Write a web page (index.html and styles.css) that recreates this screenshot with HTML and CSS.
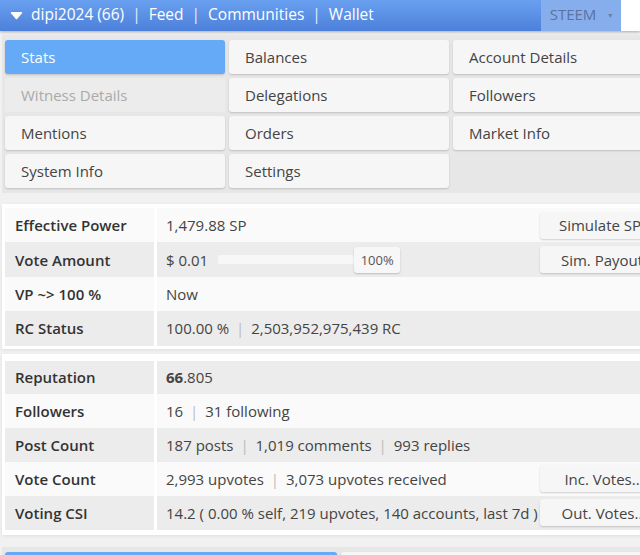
FILE: index.html
```html
<!DOCTYPE html>
<html>
<head>
  <title>Steem Stats</title>
  <link rel="stylesheet" href="styles.css">
</head>
<body>
  <header class="topbar">
    <nav class="user-nav">
      <svg class="caret" width="13" height="9" viewBox="0 0 13 9"><path d="M1.5 1h10a.8.8 0 0 1 .6 1.3L7.1 8a.8.8 0 0 1-1.2 0L.9 2.3A.8.8 0 0 1 1.5 1z" fill="#fff"/></svg>
      <a href="#">dipi2024 (66)</a>
      <span class="sep">|</span>
      <a href="#">Feed</a>
      <span class="sep">|</span>
      <a href="#">Communities</a>
      <span class="sep">|</span>
      <a href="#">Wallet</a>
    </nav>
    <div class="chain-select">STEEM <span class="chain-dot">&#9662;</span></div>
    <div class="topbar-end"></div>
  </header>

  <main class="page">
    <div class="tabs">
      <button class="tab active">Stats</button>
      <button class="tab">Balances</button>
      <button class="tab">Account Details</button>
      <button class="tab disabled">Witness Details</button>
      <button class="tab">Delegations</button>
      <button class="tab">Followers</button>
      <button class="tab">Mentions</button>
      <button class="tab">Orders</button>
      <button class="tab">Market Info</button>
      <button class="tab">System Info</button>
      <button class="tab">Settings</button>
    </div>

    <section class="panel first">
      <table class="stats">
        <tr class="light">
          <th>Effective Power</th>
          <td><div class="value"><span>1,479.88 SP</span><button class="side-btn">Simulate SP.</button></div></td>
        </tr>
        <tr class="dark">
          <th>Vote Amount</th>
          <td>
            <div class="value">
              <span>$ 0.01</span>
              <span class="slider"><span class="track"></span><span class="knob">100%</span></span>
              <button class="side-btn">Sim. Payout</button>
            </div>
          </td>
        </tr>
        <tr class="light">
          <th>VP ~&gt; 100 %</th>
          <td><div class="value"><span>Now</span></div></td>
        </tr>
        <tr class="dark">
          <th>RC Status</th>
          <td><div class="value"><span>100.00 % <span class="sep">|</span> 2,503,952,975,439 RC</span></div></td>
        </tr>
      </table>
    </section>

    <section class="panel second">
      <table class="stats">
        <tr class="dark">
          <th>Reputation</th>
          <td><div class="value"><span><b>66</b>.805</span></div></td>
        </tr>
        <tr class="light">
          <th>Followers</th>
          <td><div class="value"><span>16 <span class="sep">|</span> 31 following</span></div></td>
        </tr>
        <tr class="dark">
          <th>Post Count</th>
          <td><div class="value"><span>187 posts <span class="sep">|</span> 1,019 comments <span class="sep">|</span> 993 replies</span></div></td>
        </tr>
        <tr class="light">
          <th>Vote Count</th>
          <td><div class="value"><span>2,993 upvotes <span class="sep">|</span> 3,073 upvotes received</span><button class="side-btn">Inc. Votes..</button></div></td>
        </tr>
        <tr class="dark">
          <th>Voting CSI</th>
          <td><div class="value"><span>14.2 ( 0.00 % self, 219 upvotes, 140 accounts, last 7d )</span><button class="side-btn">Out. Votes..</button></div></td>
        </tr>
      </table>
    </section>

    <div class="bottom-tabs">
      <button class="tab active"></button>
      <button class="tab"></button>
    </div>
  </main>
</body>
</html>
```

FILE: styles.css
```css
body {
  margin: 0;
  width: 640px;
  height: 555px;
  overflow: hidden;
  background: #f1f1f1;
  font-family: 'Open Sans', 'DejaVu Sans', sans-serif;
  color: #444;
}

.topbar {
  display: flex;
  height: 31px;
  background: linear-gradient(#6aa0f0, #4c80da);
  box-shadow: 0 1px 3px rgba(0,0,0,0.3);
}

.user-nav {
  display: flex;
  align-items: center;
  flex: 1;
  padding: 0 0 4px 10px;
  font-size: 15.5px;
  color: #fff;
}

.user-nav .caret {
  margin: 3px 8px 0 0;
}

.user-nav a {
  color: #fff;
  text-decoration: none;
}

.user-nav .sep {
  margin: 0 8px;
  color: #e4ecfb;
}

.chain-select {
  width: 80px;
  display: flex;
  align-items: center;
  justify-content: center;
  gap: 12px;
  padding-bottom: 3px;
  background: #87aeec;
  color: #5b72a0;
  font-size: 15px;
}

.chain-dot {
  font-size: 8px;
  color: #6a7fa8;
}

.topbar-end {
  width: 19px;
  background: #fff;
}

.page {
  width: 672px;
}

.tabs {
  display: grid;
  grid-template-columns: repeat(3, 220px);
  grid-auto-rows: 34px;
  gap: 4px;
  margin: 4px 0 0 2px;
  padding: 5px 3px;
  background: #e7e7e7;
}

.tab {
  border: none;
  border-radius: 3px;
  background: #f6f6f6;
  box-shadow: 0 1px 2px rgba(0,0,0,0.18);
  padding: 0 0 0 16px;
  text-align: left;
  font-family: inherit;
  font-size: 15px;
  color: #444;
}

.tab.active {
  background: #64aaf6;
  color: #fff;
}

.tab.disabled {
  background: #ececec;
  box-shadow: none;
  color: #aaa;
}

.panel {
  margin-left: 2px;
  background: #fff;
  box-shadow: 0 1px 3px rgba(0,0,0,0.08);
}

.panel.first {
  margin-top: 11px;
  padding: 4px 0 3px;
}

.panel.second {
  margin-top: 5px;
  padding: 7px 0 5px;
}

.stats {
  width: 100%;
  border-collapse: separate;
  border-spacing: 3px 0;
  font-size: 15px;
}

.stats th {
  width: 139px;
  height: 34.4px;
  padding: 0 0 0 10px;
  text-align: left;
  font-weight: 600;
  color: #333;
}

.stats td {
  height: 34.4px;
  padding: 0 5px 0 9px;
  color: #444;
}

.second .stats th,
.second .stats td {
  height: 33.8px;
}

.stats tr.light th,
.stats tr.light td {
  background: #fafafa;
}

.stats tr.dark th,
.stats tr.dark td {
  background: #ececec;
}

.value {
  display: flex;
  align-items: center;
  white-space: nowrap;
}

.value b {
  font-weight: 700;
}

.stats .sep {
  color: #bbb;
  margin: 0 3px;
}

.slider {
  display: flex;
  align-items: center;
  margin-left: 10px;
}

.track {
  width: 136px;
  height: 9px;
  background: #f7f7f7;
  border-radius: 2px;
}

.knob {
  width: 46px;
  height: 26px;
  line-height: 26px;
  text-align: center;
  font-size: 13px;
  color: #555;
  background: #f7f7f7;
  border-radius: 3px;
  box-shadow: 0 1px 2px rgba(0,0,0,0.2);
}

.side-btn {
  margin-left: auto;
  flex-shrink: 0;
  width: 124px;
  height: 27px;
  border: none;
  border-radius: 3px;
  background: #f6f6f6;
  box-shadow: 0 1px 2px rgba(0,0,0,0.18);
  font-family: inherit;
  font-size: 15px;
  color: #444;
}

.bottom-tabs {
  display: grid;
  grid-template-columns: 332px 332px;
  grid-auto-rows: 34px;
  gap: 4px;
  margin: 12px 0 0 2px;
  padding: 5px 3px;
  background: #e7e7e7;
}
```
